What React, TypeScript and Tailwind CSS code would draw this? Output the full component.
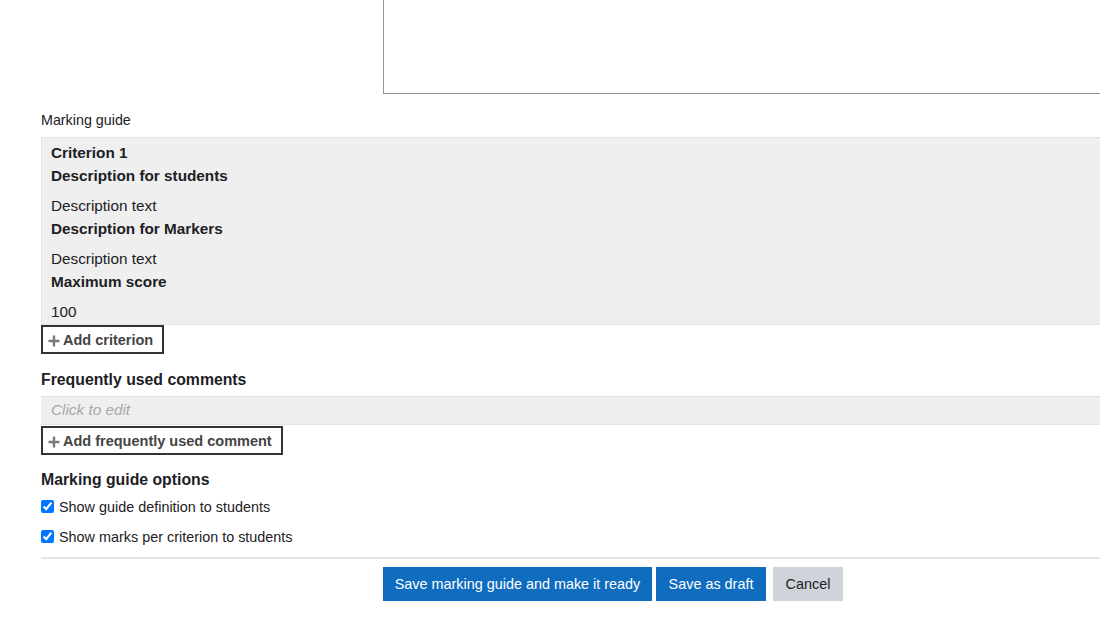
const font = { fontFamily: '"Liberation Sans", Arial, sans-serif' };

function PlusIcon() {
    return (
        <svg width="12" height="12" viewBox="0 0 12 12" className="shrink-0">
            <path d="M6 0.5v11M0.5 6h11" stroke="#7a7a7a" strokeWidth="2.4" />
        </svg>
    );
}

function AddButton({ label }: { label: string }) {
    return (
        <button className="flex items-center gap-[3px] h-[29px] pt-[3px] pl-[5px] pr-[9px] border-2 border-[#333] bg-white text-[14.5px] font-bold text-[#444] self-start">
            <PlusIcon />
            {label}
        </button>
    );
}

export default function App() {
    return (
        <div className="w-[1100px] h-[622px] overflow-hidden bg-white text-[#1d2125]" style={font}>
            {/* editor bottom */}
            <div className="flex">
                <div className="w-[383px] shrink-0" />
                <div className="h-[94px] flex-1 border-l border-b border-[#8f959e]" />
            </div>

            <div className="pl-[41px] flex flex-col">
                <p className="mt-[15px] text-[14.3px] leading-[22px]">Marking guide</p>

                <div className="mt-[6px] bg-[#efefef] border-t border-l border-b border-[#e2e2e2] pl-[9px] pt-[3px] pb-[1px] text-[15.3px] leading-[23px]">
                    <p className="font-bold">Criterion 1</p>
                    <p className="font-bold">Description for students</p>
                    <p className="mt-[7px]">Description text</p>
                    <p className="font-bold">Description for Markers</p>
                    <p className="mt-[7px]">Description text</p>
                    <p className="font-bold">Maximum score</p>
                    <p className="mt-[7px]">100</p>
                </div>

                <AddButton label="Add criterion" />

                <h3 className="mt-[14px] text-[15.8px] leading-[24px] font-bold">Frequently used comments</h3>

                <div className="mt-[4px] h-[29px] bg-[#efefef] border-t border-b border-[#e2e2e2] pl-[10px] flex items-center text-[15.3px] italic text-[#a8a8a8]">
                    Click to edit
                </div>

                <div className="mt-[1px]">
                    <AddButton label="Add frequently used comment" />
                </div>

                <h3 className="mt-[13px] text-[15.8px] leading-[24px] font-bold">Marking guide options</h3>

                <label className="mt-[3px] flex items-center gap-[5px] text-[14.4px] leading-[24px]">
                    <input type="checkbox" defaultChecked className="w-[13px] h-[13px] accent-[#0075ff] -mt-[2px]" />
                    Show guide definition to students
                </label>
                <label className="mt-[6px] flex items-center gap-[5px] text-[14.4px] leading-[24px]">
                    <input type="checkbox" defaultChecked className="w-[13px] h-[13px] accent-[#0075ff] -mt-[2px]" />
                    Show marks per criterion to students
                </label>

                <div className="mt-[8px] border-t-2 border-[#e6e6e6]" />
            </div>

            <div className="flex mt-[8px]">
                <div className="w-[383px] shrink-0" />
                <div className="flex gap-[4px] text-[14.4px]">
                    <button className="h-[34px] w-[269px] pt-[2px] bg-[#0f6cbf] text-white">
                        Save marking guide and make it ready
                    </button>
                    <button className="h-[34px] w-[110px] pt-[2px] bg-[#0f6cbf] text-white">Save as draft</button>
                    <button className="ml-[3px] h-[34px] w-[70px] pt-[2px] bg-[#ced4da] text-[#1d2125]">Cancel</button>
                </div>
            </div>
        </div>
    );
}
